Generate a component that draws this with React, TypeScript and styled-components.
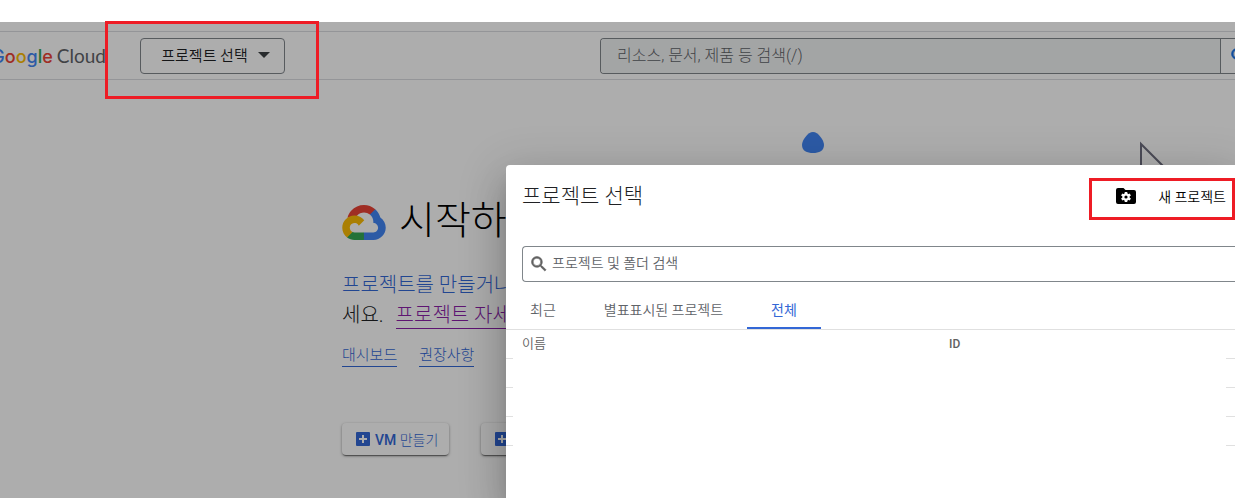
import React from "react";
import styled, { createGlobalStyle } from "styled-components";

const GlobalStyle = createGlobalStyle`
  *, *::before, *::after { box-sizing: border-box; }
  body {
    margin: 0;
    background: #ffffff;
    color: #202124;
    font-family: Roboto, "Noto Sans CJK KR", sans-serif;
    font-weight: 300;
    font-size: 14px;
  }
  button, input { font: inherit; color: inherit; }
  h1, h2, p { margin: 0; font-weight: 300; }
`;

const Stage = styled.div`
  position: relative;
  overflow: hidden;
  margin: 22px 11px 0 0;
  min-height: calc(100vh - 22px);
  padding-top: 9px;
  background: #ffffff;
`;

const Header = styled.header`
  display: flex;
  align-items: center;
  height: 49px;
  border-top: 1px solid #dadce0;
  border-bottom: 1px solid #dadce0;
`;

const Brand = styled.a`
  display: flex;
  align-items: baseline;
  justify-content: flex-end;
  gap: 4px;
  flex: none;
  width: 106px;
  padding-top: 1px;
  overflow: hidden;
  color: #5f6368;
  font-family: Lato, sans-serif;
  font-size: 19px;
  font-weight: 400;
  line-height: 28px;
  text-decoration: none;
`;

const BrandName = styled.span`
  font-family: Inter, sans-serif;
  font-size: 18px;
  font-weight: 500;
`;

const Letter = styled.span<{ $color: string }>`
  color: ${(p) => p.$color};
`;

const ProjectPicker = styled.button`
  display: flex;
  align-items: center;
  justify-content: center;
  gap: 10px;
  flex: none;
  width: 145px;
  height: 36px;
  margin-left: 34px;
  padding: 0 0 2px 6px;
  border: 1px solid #80868b;
  border-radius: 4px;
  background: transparent;
  color: #202124;
  font-size: 15px;
  font-weight: 350;
  white-space: nowrap;
`;

const GlobalSearch = styled.form`
  display: flex;
  flex: 1;
  height: 36px;
  margin-left: 315px;
  border: 1px solid #80868b;
  border-right: 0;
  border-radius: 4px 0 0 4px;
  overflow: hidden;
`;

const GlobalSearchInput = styled.input`
  flex: 1;
  min-width: 0;
  padding: 0 16px;
  border: 0;
  background: #f1f3f4;
  font-size: 16px;
  &::placeholder { color: #5f6368; opacity: 1; }
`;

const GlobalSearchButton = styled.button`
  flex: none;
  width: 15px;
  padding: 0 0 0 8px;
  overflow: hidden;
  border: 0;
  border-left: 1px solid #80868b;
  background: transparent;
  color: #1a73e8;
  svg { display: block; }
`;

const Welcome = styled.main`
  padding: 116px 0 42px 342px;
  white-space: nowrap;
`;

const Heading = styled.div`
  display: flex;
  align-items: center;
  gap: 13px;
  height: 52px;
  h1 { font-size: 39px; line-height: 52px; color: #000000; padding-bottom: 2px; }
`;

const Lead = styled.p`
  margin-top: 22px;
  font-size: 20px;
  line-height: 30px;
`;

const TextLink = styled.a<{ $visited?: boolean; $underline?: boolean }>`
  display: inline-block;
  color: ${(p) => (p.$visited ? "#8b1fa9" : "#3367d6")};
  text-decoration: none;
  border-bottom: ${(p) => (p.$underline ? "1px solid currentColor" : "0")};
`;

const LeadLine = styled.span`
  display: flex;
  align-items: center;
  gap: 12px;
  ${TextLink} { line-height: 26px; }
`;

const QuickLinks = styled.nav`
  display: flex;
  gap: 22px;
  margin-top: 15px;
  font-size: 15px;
  line-height: 21px;
`;

const Actions = styled.div`
  display: flex;
  gap: 32px;
  margin-top: 56px;
`;

const ActionButton = styled.button`
  display: flex;
  align-items: center;
  gap: 5px;
  height: 32px;
  padding: 0 11px 0 14px;
  border: 0;
  border-radius: 4px;
  background: #ffffff;
  color: #3367d6;
  box-shadow: 0 2px 1px -1px rgba(0, 0, 0, 0.4), 0 1px 3px rgba(0, 0, 0, 0.4);
  font-size: 14px;
  b { font-weight: 500; }
`;

const Decoration = styled.svg<{ $left: number; $top: number }>`
  position: absolute;
  left: ${(p) => p.$left}px;
  top: ${(p) => p.$top}px;
`;

const Scrim = styled.div`
  position: absolute;
  inset: 0;
  background: rgba(0, 0, 0, 0.32);
`;

const Dialog = styled.section`
  position: absolute;
  left: 506px;
  top: 143px;
  right: 0;
  bottom: 0;
  border-radius: 4px 0 0 0;
  background: #ffffff;
  box-shadow: 0 11px 15px -7px rgba(0, 0, 0, 0.2),
    0 24px 38px 3px rgba(0, 0, 0, 0.14), 0 9px 46px 8px rgba(0, 0, 0, 0.12);
`;

const DialogHeader = styled.div`
  display: flex;
  align-items: center;
  justify-content: space-between;
  height: 62px;
  padding: 0 9px 0 16px;
  h2 { font-size: 21px; line-height: 28px; }
`;

const NewProject = styled.button`
  display: flex;
  align-items: center;
  gap: 21px;
  padding: 0;
  border: 0;
  background: transparent;
  color: #000000;
  font-size: 14px;
  font-weight: 350;
`;

const DialogSearch = styled.label`
  display: flex;
  align-items: center;
  gap: 3px;
  height: 36px;
  margin: 19px 0 0 16px;
  padding-left: 6px;
  border: 1px solid #80868b;
  border-right: 0;
  border-radius: 4px 0 0 4px;
  color: #616161;
  input {
    flex: 1;
    min-width: 0;
    padding: 0 0 2px;
    border: 0;
    outline: 0;
    background: transparent;
    font-weight: 350;
  }
  input::placeholder { color: #5f6368; opacity: 1; }
`;

const Tabs = styled.div`
  display: flex;
  padding-top: 9px;
  border-bottom: 1px solid #e0e0e0;
`;

const Tab = styled.button<{ $active?: boolean }>`
  height: 38px;
  padding: 0 24px;
  border: 0;
  border-bottom: 2px solid ${(p) => (p.$active ? "#3367d6" : "transparent")};
  background: transparent;
  color: ${(p) => (p.$active ? "#3367d6" : "#5f6368")};
  font-size: 14px;
  font-weight: ${(p) => (p.$active ? 400 : 350)};
`;

const ProjectTable = styled.table`
  width: 100%;
  border-collapse: separate;
  border-spacing: 0;
  table-layout: fixed;
  color: #616161;
  font-size: 13px;
  line-height: 18px;
  text-align: left;
  th, td { height: 29px; padding: 0; }
  th { font-weight: 350; padding-bottom: 2px; }
`;

const EdgeCell = styled.td`
  border-bottom: 1px solid #e0e0e0;
`;

const IdHead = styled.th`
  font-size: 12px;
  && { font-weight: 500; }
`;

const Highlight = styled.div<{ $area: "picker" | "create" }>`
  position: absolute;
  border: 3px solid #ee1c25;
  pointer-events: none;
  ${(p) =>
    p.$area === "picker"
      ? "left: 105px; top: 21px; width: 214px; height: 78px;"
      : "right: 11px; top: 178px; width: 146px; height: 42px;"}
`;

const SearchIcon = ({ size }: { size: number }) => (
  <svg width={size} height={size} viewBox="0 0 24 24" fill="currentColor" aria-hidden="true">
    <path
      stroke="currentColor"
      strokeWidth="0.7"
      d="M15.5 14h-.79l-.28-.27A6.47 6.47 0 0 0 16 9.5 6.5 6.5 0 1 0 9.5 16c1.61 0 3.09-.59 4.23-1.57l.27.28v.79l5 4.99L20.49 19zM9.5 14a4.5 4.5 0 1 1 0-9 4.5 4.5 0 0 1 0 9"
    />
  </svg>
);

const CloudLogo = () => (
  <svg width="44" height="35" viewBox="0 0 256 206" aria-hidden="true">
    <path fill="#ea4335" d="M170.252 56.819 192.495 34.577 193.977 25.212C153.445-11.643 88.976-7.464 52.421 33.953 42.267 45.455 34.734 59.819 30.717 74.573L38.683 73.45 83.169 66.114 86.603 62.602C106.392 40.868 139.85 37.943 162.706 56.44Z" />
    <path fill="#4285f4" d="M224.205 73.918C219.093 55.091 208.597 38.167 194.007 25.222L162.791 56.438C175.972 67.208 183.477 83.428 183.136 100.446V105.988C198.485 105.988 210.927 118.43 210.927 133.778 210.927 149.127 198.485 161.257 183.136 161.257H127.464L122 167.19V200.514L127.464 205.744H183.136C223.042 206.054 255.654 174.207 255.966 134.302 256.154 110.114 244.252 87.455 224.205 73.918" />
    <path fill="#34a853" d="M71.87 205.796H127.464V161.297H71.87C67.909 161.297 64.069 160.446 60.465 158.797L52.587 161.216 30.242 183.459 28.288 191.036C40.795 200.503 56.184 205.828 71.87 205.796" />
    <path fill="#fbbc05" d="M71.87 61.426C31.964 61.664-.192 94.208.046 134.114.18 156.399 10.595 177.386 28.288 190.936L60.537 158.687C46.55 152.368 40.328 135.908 46.646 121.922 52.965 107.936 69.424 101.716 83.41 108.033 89.574 110.818 94.515 115.758 97.3 121.922L129.549 89.673C115.766 71.694 94.524 61.329 71.87 61.426" />
  </svg>
);

const AddIcon = () => (
  <svg width="14" height="14" viewBox="0 0 14 14" aria-hidden="true">
    <rect width="14" height="14" rx="1" fill="#3367d6" />
    <path d="M7 3v8M3 7h8" stroke="#ffffff" strokeWidth="2" />
  </svg>
);

const FolderGearIcon = () => (
  <svg width="22" height="18" viewBox="0 0 22 18" aria-hidden="true">
    <path d="M3 1h5.500l2 2H19a2 2 0 0 1 2 2v10a2 2 0 0 1-2 2H3a2 2 0 0 1-2-2V3a2 2 0 0 1 2-2z" />
    <g stroke="#ffffff" strokeWidth="2.600">
      <path d="M11 5v10M6.700 7.500l8.600 5M6.700 12.500l8.600-5" />
    </g>
    <circle cx="11" cy="10" r="3.700" fill="#ffffff" />
    <circle cx="11" cy="10" r="1.600" />
  </svg>
);

const brandLetters: [string, string][] = [
  ["G", "#4285f4"],
  ["o", "#ea4335"],
  ["o", "#fbbc05"],
  ["g", "#4285f4"],
  ["l", "#34a853"],
  ["e", "#ea4335"],
];

const tabs = ["최근", "별표표시된 프로젝트", "전체"];

export default function App() {
  return (
    <>
      <GlobalStyle />
      <Stage>
        <Header>
          <Brand href="#">
            <BrandName>
              {brandLetters.map(([char, color], i) => (
                <Letter key={i} $color={color}>{char}</Letter>
              ))}
            </BrandName>
            <span>Cloud</span>
          </Brand>
          <ProjectPicker type="button">
            프로젝트 선택
            <svg width="12" height="6" viewBox="0 0 12 6" aria-hidden="true">
              <path d="M0 0h12L6 6z" fill="#3c4043" />
            </svg>
          </ProjectPicker>
          <GlobalSearch role="search">
            <GlobalSearchInput aria-label="검색" placeholder="리소스, 문서, 제품 등 검색(/)" />
            <GlobalSearchButton type="button" aria-label="검색">
              <SearchIcon size={20} />
            </GlobalSearchButton>
          </GlobalSearch>
        </Header>

        <Welcome>
          <Heading>
            <CloudLogo />
            <h1>시작하</h1>
          </Heading>
          <Lead>
            <TextLink href="#">프로젝트를 만들거나</TextLink>
            <LeadLine>
              세요.
              <TextLink href="#" $visited $underline>프로젝트 자세</TextLink>
            </LeadLine>
          </Lead>
          <QuickLinks>
            <TextLink href="#" $underline>대시보드</TextLink>
            <TextLink href="#" $underline>권장사항</TextLink>
          </QuickLinks>
          <Actions>
            <ActionButton type="button">
              <AddIcon />
              <span><b>VM</b> 만들기</span>
            </ActionButton>
            <ActionButton type="button" aria-label="추가">
              <AddIcon />
            </ActionButton>
          </Actions>
        </Welcome>

        <Decoration $left={802} $top={110} width="22" height="22" viewBox="0 0 22 22" aria-hidden="true">
          <path d="M11 0C16 0 22 8 22 13c0 6-5 8-11 8S0 19 0 13C0 8 6 0 11 0z" fill="#4285f4" />
        </Decoration>
        <Decoration $left={1139} $top={119} width="40" height="40" viewBox="0 0 40 40" aria-hidden="true">
          <path d="M2 40V3l37 37" fill="none" stroke="#6f6f80" strokeWidth="2" />
        </Decoration>

        <Scrim />

        <Dialog role="dialog" aria-label="프로젝트 선택">
          <DialogHeader>
            <h2>프로젝트 선택</h2>
            <NewProject type="button">
              <FolderGearIcon />
              새 프로젝트
            </NewProject>
          </DialogHeader>
          <DialogSearch>
            <SearchIcon size={20} />
            <input aria-label="프로젝트 및 폴더 검색" placeholder="프로젝트 및 폴더 검색" />
          </DialogSearch>
          <Tabs role="tablist">
            {tabs.map((label, i) => (
              <Tab key={label} type="button" role="tab" aria-selected={i === 2} $active={i === 2}>
                {label}
              </Tab>
            ))}
          </Tabs>
          <ProjectTable>
            <colgroup>
              <col style={{ width: 7 }} />
              <col style={{ width: 9 }} />
              <col style={{ width: 427 }} />
              <col />
              <col style={{ width: 9 }} />
            </colgroup>
            <thead>
              <tr>
                <EdgeCell />
                <td />
                <th scope="col">이름</th>
                <IdHead scope="col">ID</IdHead>
                <EdgeCell />
              </tr>
            </thead>
            <tbody>
              {[0, 1, 2].map((row) => (
                <tr key={row}>
                  <EdgeCell />
                  <td colSpan={3} />
                  <EdgeCell />
                </tr>
              ))}
            </tbody>
          </ProjectTable>
        </Dialog>
      </Stage>
      <Highlight $area="picker" />
      <Highlight $area="create" />
    </>
  );
}
